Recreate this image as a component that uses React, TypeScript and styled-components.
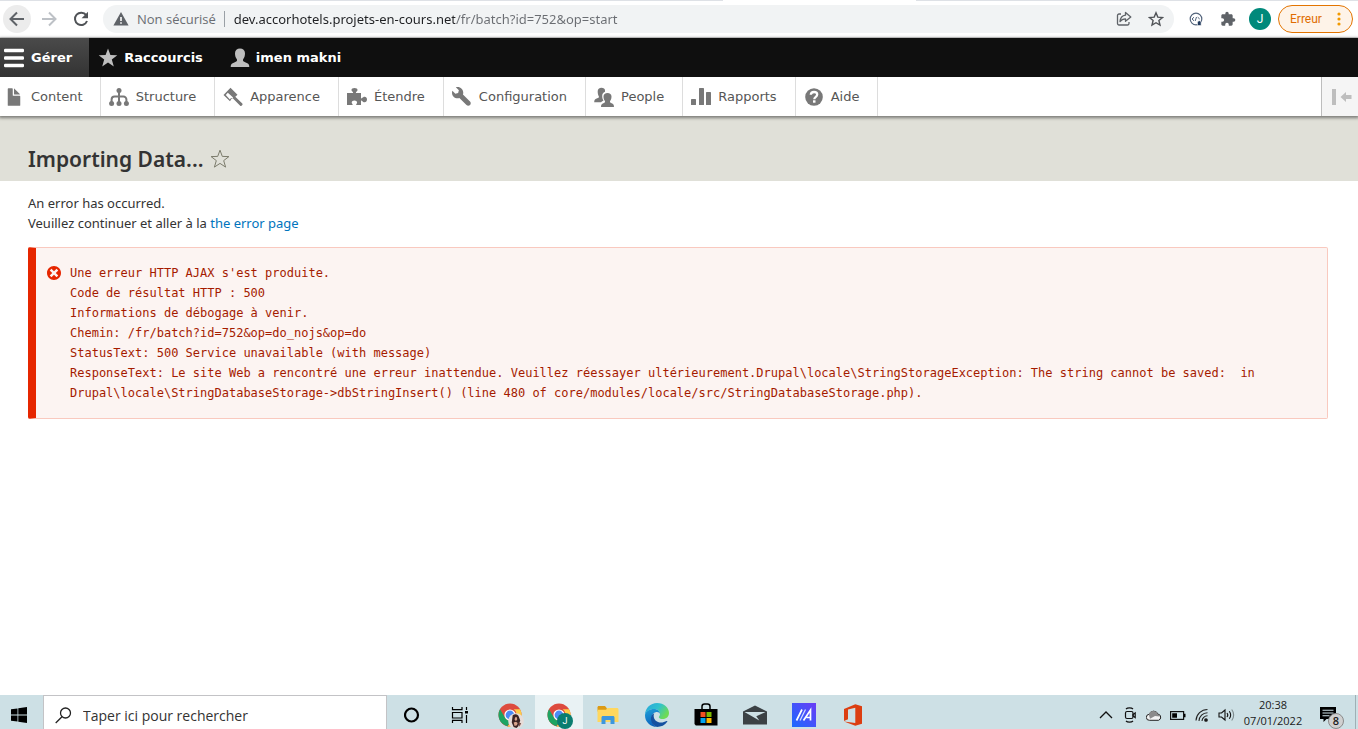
import React from "react";
import styled, { createGlobalStyle, css } from "styled-components";

const GlobalStyle = createGlobalStyle`
  *, *::before, *::after { box-sizing: border-box; }
  html, body { margin: 0; padding: 0; background: #fff; }
  h1, p { margin: 0; }
  button { border: 0; padding: 0; margin: 0; background: none; font: inherit; color: inherit; cursor: pointer; }
  input { border: 0; padding: 0; margin: 0; background: none; outline: 0; }
  svg { display: block; flex: none; }
`;

const uiFont = `"Open Sans", "Noto Sans", sans-serif`;
const contentFont = `"Noto Sans", "Open Sans", sans-serif`;
const badgeFont = `Roboto, "Liberation Sans", sans-serif`;
const toolbarFont = `"DejaVu Sans", Verdana, sans-serif`;

const Page = styled.div`
  display: flex;
  flex-direction: column;
  min-height: 100vh;
  font-family: ${uiFont};
`;

/* ---------- browser bar ---------- */

const BrowserBar = styled.header`
  display: flex;
  align-items: center;
  gap: 4px;
  height: 38px;
  padding: 1px 5px 0 3px;
  border-bottom: 1px solid #dcdcdc;
  background: linear-gradient(90deg, #dee1e6 723px, #fff 723px 916px, #dee1e6 916px) top / 100% 1px no-repeat #fff;
`;

const BarButton = styled.button<{ $filled?: boolean }>`
  display: flex;
  align-items: center;
  justify-content: center;
  flex: none;
  width: 28px;
  height: 28px;
  border-radius: 50%;
  background: ${(p) => (p.$filled ? "#ececec" : "transparent")};
`;

const AddressBox = styled.form`
  display: flex;
  align-items: center;
  flex: 1;
  min-width: 0;
  height: 28px;
  margin: 0 4px;
  padding: 0 4px 0 10px;
  border-radius: 14px;
  background: #f1f3f4;
  font-size: 13px;
  gap: 4px;
`;

const SecurityLabel = styled.button`
  display: flex;
  align-items: center;
  flex: none;
  gap: 8px;
  height: 16px;
  padding-right: 8px;
  border-right: 1px solid #9aa0a6;
  color: #6a6d72;
`;

const UrlInput = styled.input`
  flex: 1;
  min-width: 0;
  height: 20px;
  margin-left: 5px;
  font-family: ${contentFont};
  font-size: 13px;
  color: transparent;
  caret-color: #202124;
  background: linear-gradient(90deg, #202124 221px, #6a6d72 221px);
  background-clip: text;
  -webkit-background-clip: text;
`;

const Avatar = styled.button`
  display: flex;
  align-items: center;
  justify-content: center;
  flex: none;
  width: 22px;
  height: 22px;
  margin: 0 3px;
  border-radius: 50%;
  background: #00897b;
  color: #fff;
  font-family: ${badgeFont};
  font-size: 12px;
`;

const ErrorPill = styled.button`
  display: flex;
  align-items: center;
  justify-content: space-between;
  flex: none;
  width: 75px;
  height: 28px;
  padding: 0 11px;
  border: 1px solid #e37400;
  border-radius: 14px;
  background: #fef3e8;
  color: #e06c00;
  font-family: ${badgeFont};
  font-size: 12px;
`;

/* ---------- Drupal toolbar ---------- */

const Toolbar = styled.nav`
  position: relative;
  font-family: ${toolbarFont};
  font-size: 13px;
  box-shadow: 0 1px 3px 1px rgba(0, 0, 0, 0.45);
`;

const ToolbarTabs = styled.div`
  display: flex;
  height: 39px;
  background: #0f0f0f;
`;

const ToolbarTab = styled.button<{ $active?: boolean }>`
  display: flex;
  align-items: center;
  gap: 6px;
  padding: 0 18px 0 9px;
  color: #fff;
  font-weight: 700;
  ${(p) =>
    p.$active &&
    css`
      gap: 7px;
      padding: 0 17px 0 4px;
      background: linear-gradient(#4a4a4a, #333);
    `}
`;

const ToolbarTray = styled.div`
  display: flex;
  height: 39px;
  background: #fff;
`;

const TrayItem = styled.a`
  display: flex;
  align-items: center;
  gap: 7px;
  padding: 0 18px 0 8px;
  border-right: 1px solid #ddd;
  color: #565656;
  text-decoration: none;
  &:first-child { padding: 0 17px 0 4px; }
`;

const OrientationToggle = styled.button`
  display: flex;
  align-items: center;
  justify-content: center;
  width: 37px;
  margin-left: auto;
  padding-left: 4px;
  border-left: 1px solid #bdbdbd;
  background: #f5f5f5;
`;

/* ---------- page content ---------- */

const PageHeader = styled.div`
  display: flex;
  align-items: center;
  gap: 3px;
  height: 65px;
  padding: 20px 28px 0;
  background: #e0e0d8;
`;

const Title = styled.h1`
  font-family: ${contentFont};
  font-size: 21px;
  line-height: 28px;
  font-weight: 600;
  color: #333;
`;

const Main = styled.main`
  flex: 1;
  padding: 12px 30px 24px 28px;
  font-family: ${contentFont};
  font-size: 13px;
  line-height: 20px;
  color: #333;
`;

const ErrorLink = styled.a`
  color: #0074bd;
  text-decoration: none;
`;

const ErrorMessage = styled.div`
  display: flex;
  gap: 8px;
  margin-top: 14px;
  padding: 15px 16px 15px 10px;
  border: 1px solid #f9c9bf;
  border-left: 8px solid #e62600;
  border-radius: 2px;
  background: #fcf4f2;
  color: #a51b00;
`;

const ErrorIcon = styled.svg`
  margin-top: 2px;
`;

const ErrorText = styled.div`
  flex: 1;
  min-width: 0;
  font-family: "DejaVu Sans Mono", Consolas, monospace;
  font-size: 12px;
  line-height: 20px;
  white-space: pre-wrap;
`;

/* ---------- task bar ---------- */

const TaskBar = styled.footer`
  display: flex;
  align-items: flex-start;
  height: 34px;
  overflow: hidden;
  background: #cde0e5;
  color: #1a1a1a;
`;

const TaskButton = styled.button<{ $active?: boolean; $width?: number }>`
  position: relative;
  display: flex;
  align-items: center;
  justify-content: center;
  flex: none;
  width: ${(p) => p.$width ?? 48}px;
  height: 40px;
  background: ${(p) => (p.$active ? "#e9f2f4" : "transparent")};
`;

const StartButton = styled(TaskButton)`
  padding-right: 6px;
`;

const SearchBox = styled.label`
  display: flex;
  align-items: center;
  gap: 11px;
  flex: 0 1 344px;
  height: 40px;
  padding: 0 11px;
  border: 1px solid #c3c3c6;
  background: #fff;
`;

const SearchInput = styled.input`
  flex: 1;
  min-width: 0;
  font-family: ${uiFont};
  font-size: 14px;
  &::placeholder { color: #333; opacity: 1; }
`;

const AppButtons = styled.div`
  display: flex;
  gap: 1px;
  padding-left: 1px;
`;

const Tray = styled.div`
  display: flex;
  margin-left: auto;
`;

const Clock = styled.button`
  display: flex;
  flex-direction: column;
  align-items: center;
  width: 70px;
  padding-top: 2px;
  font-size: 11px;
  line-height: 16px;
`;

const CountBadge = styled.span`
  position: absolute;
  left: 20px;
  top: 18px;
  width: 16px;
  height: 16px;
  border: 1px solid #8a8a8a;
  border-radius: 50%;
  background: #d0d0d0;
  font-size: 11px;
  font-weight: 600;
  line-height: 14px;
  text-align: center;
`;

const ProfileBadge = styled.span`
  position: absolute;
  left: 22px;
  top: 18px;
  width: 16px;
  height: 16px;
  border-radius: 50%;
  background: #0a7d70;
  color: #fff;
  font-family: ${badgeFont};
  font-size: 9px;
  line-height: 16px;
  text-align: center;
`;

const PhotoBadge = styled.svg`
  position: absolute;
  left: 22px;
  top: 18px;
`;

const ShowDesktop = styled.button`
  width: 3px;
  height: 40px;
  border-left: 1px solid #9fb0b5;
`;

/* ---------- icons ---------- */

const grey = "#787878";

const ExtendPath =
  "M20.5 11H19V7c0-1.100-.9-2-2-2h-4V3.500a2.500 2.500 0 0 0-5 0V5H4c-1.100 0-2 .9-2 2v3.800h1.500a2.700 2.700 0 0 1 0 5.400H2V20c0 1.100.9 2 2 2h3.800v-1.500a2.700 2.700 0 0 1 5.400 0V22H17c1.100 0 2-.9 2-2v-4h1.500a2.500 2.500 0 0 0 0-5z";

const FileIcon = () => (
  <svg width="20" height="20" viewBox="0 0 16 16" fill={grey}>
    <path d="M12.502 7h-5c-.276 0-.502-.225-.502-.5v-5c0-.275-.225-.5-.5-.5h-3c-.275 0-.5.225-.5.5v13.029c0 .275.225.5.5.5h9.002c.275 0 .5-.225.5-.5V7.500c0-.275-.225-.5-.5-.5zM8.502 6h4c.275 0 .34-.159.146-.354l-4.293-4.292c-.195-.195-.353-.129-.353.146v4c0 .275.225.5.5.5z" />
  </svg>
);

const StructureIcon = () => (
  <svg width="20" height="20" viewBox="0 0 20 20" fill={grey}>
    <circle cx="10" cy="3.500" r="2.500" />
    <circle cx="2.600" cy="16.500" r="2.500" />
    <circle cx="10" cy="16.500" r="2.500" />
    <circle cx="17.400" cy="16.500" r="2.500" />
    <path d="M10 4v12M2.600 16v-3.500a3 3 0 0 1 3-3h8.800a3 3 0 0 1 3 3V16" fill="none" stroke={grey} strokeWidth="2" />
  </svg>
);

const AppearanceIcon = () => (
  <svg width="20" height="20" viewBox="0 0 20 20">
    <path d="M.5 8 7.500 .8l7 7-3 2.800-3 1.200-1.500 2.400z" fill={grey} />
    <path d="M2.800 8 4.800 5.800l5.600 5-2.600.5-.9 1.200z" fill="#fff" />
    <path d="m11.500 11 6.500 6.300" stroke={grey} strokeWidth="3" strokeLinecap="round" />
  </svg>
);

const PuzzleIcon = () => (
  <svg width="20" height="20" viewBox="0 0 20 20" fill={grey}>
    <path d="M0 6h5.500c.6 0 .8-.5.4-1C5 4 4.500 3.600 4.500 2.900 4.500 1.700 5.700 1 7.500 1s3 .7 3 1.900c0 .7-.5 1.100-1.400 2.100-.4.5-.2 1 .4 1H14v4.700c0 .7.500.9 1.100.4.800-.7 1.500-1.300 2.500-1.300 1.400 0 2.400 1.100 2.400 2.700s-1 2.700-2.400 2.700c-1 0-1.700-.6-2.500-1.300-.6-.5-1.100-.3-1.100.4V18H9.800c-.7 0-.9-.6-.4-1.100.5-.6.7-1 .7-1.500 0-1.200-1.200-2-2.700-2s-2.700.8-2.700 2c0 .5.200.9.7 1.500.5.500.3 1.100-.4 1.100H0z" />
  </svg>
);

const WrenchIcon = () => (
  <svg width="20" height="20" viewBox="0 0 16 16" fill={grey}>
    <path d="M14.416 11.586l-5.666-5.665c.15-.449.252-.921.252-1.421 0-2.485-2.016-4.500-4.502-4.500-.505 0-.981.102-1.434.255l2.431 2.431-.588 2.196-2.196.588-2.445-2.445c-.162.464-.268.956-.268 1.475 0 2.486 2.014 4.500 4.500 4.500.5 0 .972-.102 1.421-.251l5.667 5.665c.781.781 2.047.781 2.828 0s.781-2.047 0-2.828z" />
  </svg>
);

const PeopleIcon = () => (
  <svg width="20" height="20" viewBox="0 0 20 20" fill={grey}>
    <path d="M7.500.8c2 0 3.500 1 3.500 2.800v1.200C9 5.600 8.200 7 8.200 9c0 1.800.4 3.200 1.300 4.400-.9.600-1.800.9-2.400 1.800H.2c0-2.300.7-3 2.500-3.700 1.800-.6 2.500-1 2.100-2.300C4 8.200 3.700 6.400 3.700 4.300 3.700 2.200 5.300.8 7.500.8z" />
    <path d="M13.500 6c2.300 0 4 1.300 4 3.600 0 1.900-.4 3.300-1.400 4.500-.4 1.300.2 1.700 1.500 2.100 1.700.6 2.400 1.200 2.400 3.800H7c0-2.600.7-3.200 2.400-3.800 1.300-.4 1.900-.8 1.500-2.100-1-1.200-1.400-2.600-1.400-4.500C9.500 7.300 11.200 6 13.500 6z" />
  </svg>
);

const ReportsIcon = () => (
  <svg width="20" height="20" viewBox="0 0 20 20" fill={grey}>
    <rect x="0" y="12" width="5" height="6" rx=".6" />
    <rect x="8" y="1" width="5" height="17" rx=".6" />
    <rect x="15" y="5" width="5" height="13" rx=".6" />
  </svg>
);

const HelpIcon = () => (
  <svg width="20" height="20" viewBox="0 0 20 20">
    <circle cx="10" cy="10" r="8.800" fill={grey} />
    <path d="M6.800 7.700C6.900 5.900 8.200 5 10 5s3.200 1 3.200 2.600c0 1.300-.7 1.900-1.600 2.600-.8.600-1.300 1-1.300 2" fill="none" stroke="#fff" strokeWidth="2.300" />
    <rect x="9" y="13.300" width="2.500" height="2.400" fill="#fff" />
  </svg>
);

const MenuIcon = () => (
  <svg width="20" height="20" viewBox="0 0 20 20" fill="#fff">
    <rect y="0.700" width="20" height="3.600" rx="1.200" />
    <rect y="8.200" width="20" height="3.600" rx="1.200" />
    <rect y="15.700" width="20" height="3.600" rx="1.200" />
  </svg>
);

const StarIcon = () => (
  <svg width="20" height="20" viewBox="0 0 20 20" fill="#bebebe">
    <path d="m10 .6 2.400 6.500 6.900.2-5.500 4.300 2 6.800L10 14.500l-5.800 3.900 2-6.800L.7 7.300l6.900-.2z" />
  </svg>
);

const PersonIcon = () => (
  <svg width="20" height="20" viewBox="0 0 20 20" fill="#bebebe">
    <path d="M10 .5c2.900 0 5 1.700 5 4.800 0 2.500-.6 4.500-1.900 6-.5 1.900.3 2.400 2.600 3.100 2.600.8 3.600 1.700 3.600 4.600H.7c0-2.900 1-3.800 3.600-4.600 2.300-.7 3.100-1.200 2.600-3.100C5.600 9.800 5 7.800 5 5.300 5 2.200 7.100.5 10 .5z" />
  </svg>
);

const ChromeIcon = () => (
  <svg width="24" height="24" viewBox="0 0 24 24">
    <circle cx="12" cy="12" r="11.500" fill="#dd4b3e" />
    <path d="M2 6.300 7.200 15a5.700 5.700 0 0 0 5.500 2.700l-3.200 5.500A11.500 11.500 0 0 1 2 6.300z" fill="#1da462" />
    <path d="M22 6.300a11.500 11.500 0 0 1-12.500 17L16.900 15a5.700 5.700 0 0 0-1.200-8.700z" fill="#ffcd46" />
    <circle cx="12" cy="12" r="5.600" fill="#fff" />
    <circle cx="12" cy="12" r="4.400" fill="#4c8bf5" />
  </svg>
);

const trayItems: [string, () => React.JSX.Element][] = [
  ["Content", FileIcon],
  ["Structure", StructureIcon],
  ["Apparence", AppearanceIcon],
  ["Étendre", PuzzleIcon],
  ["Configuration", WrenchIcon],
  ["People", PeopleIcon],
  ["Rapports", ReportsIcon],
  ["Aide", HelpIcon],
];

const errorLines = [
  "Une erreur HTTP AJAX s'est produite.",
  "Code de résultat HTTP : 500",
  "Informations de débogage à venir.",
  "Chemin: /fr/batch?id=752&op=do_nojs&op=do",
  "StatusText: 500 Service unavailable (with message)",
  "ResponseText: Le site Web a rencontré une erreur inattendue. Veuillez réessayer ultérieurement.Drupal\\locale\\StringStorageException: The string cannot be saved:  in Drupal\\locale\\StringDatabaseStorage->dbStringInsert() (line 480 of core/modules/locale/src/StringDatabaseStorage.php).",
];

function Browser() {
  return (
    <BrowserBar>
      <BarButton $filled aria-label="Retour">
        <svg width="16" height="16" viewBox="0 0 16 16" fill="none" stroke="#5f6368" strokeWidth="2">
          <path d="M15 8H2M8 1.500 1.500 8 8 14.500" />
        </svg>
      </BarButton>
      <BarButton aria-label="Avancer">
        <svg width="16" height="16" viewBox="0 0 16 16" fill="none" stroke="#bdc1c6" strokeWidth="2">
          <path d="M1 8h13M8 1.500 14.500 8 8 14.500" />
        </svg>
      </BarButton>
      <BarButton aria-label="Actualiser">
        <svg width="16" height="16" viewBox="0 0 16 16">
          <path d="M13.200 4.200A6.200 6.200 0 1 0 14 10" fill="none" stroke="#505357" strokeWidth="2" />
          <path d="M15 .8v6.400H8.600z" fill="#505357" />
        </svg>
      </BarButton>
      <AddressBox>
        <SecurityLabel type="button">
          <svg width="16" height="14" viewBox="0 0 16 14">
            <path d="M8 0l7.600 13.500H.4z" fill="#5f6368" />
            <path d="M7.200 5h1.600v4H7.200zM7.200 10.200h1.600v1.600H7.200z" fill="#fff" />
          </svg>
          Non sécurisé
        </SecurityLabel>
        <UrlInput aria-label="Adresse" defaultValue="dev.accorhotels.projets-en-cours.net/fr/batch?id=752&op=start" />
        <BarButton type="button" aria-label="Partager">
          <svg width="16" height="16" viewBox="0 0 16 16" fill="none" stroke="#5f6368" strokeWidth="1.300" strokeLinejoin="round">
            <path d="M5 3H3a1.500 1.500 0 0 0-1.500 1.500v8A1.500 1.500 0 0 0 3 14h8.500a1.500 1.500 0 0 0 1.500-1.500V11" />
            <path d="M9.500 1.500 14.800 6 9.500 10.300V7.800C7 7.800 5.300 8.600 4 10.600c.3-3.200 2.200-6 5.500-6.400z" />
          </svg>
        </BarButton>
        <BarButton type="button" aria-label="Favori">
          <svg width="16" height="16" viewBox="0 0 16 16" fill="none" stroke="#505357" strokeWidth="1.400">
            <path d="m8 1.800 1.800 4.300 4.700.4-3.600 3 1.100 4.600L8 11.700l-4 2.400 1.100-4.600-3.600-3 4.700-.4z" />
          </svg>
        </BarButton>
      </AddressBox>
      <BarButton aria-label="Extension">
        <svg width="14" height="14" viewBox="0 0 14 14" fill="none" stroke="#53647c">
          <circle cx="7" cy="7" r="5.800" strokeWidth="1.200" />
          <path d="M5 5.200 3 7l2 1.800M8.700 5.200l2 1.800M7.500 5 6.200 9" />
          <path d="M8.500 13.500v-3a1.800 1.800 0 0 1 3.600 0v3z" fill="#223a5e" stroke="#f7f7f7" strokeWidth=".6" />
        </svg>
      </BarButton>
      <BarButton aria-label="Extensions">
        <svg width="16" height="16" viewBox="0 0 24 24" fill="#5f6368">
          <path d={ExtendPath} />
        </svg>
      </BarButton>
      <Avatar aria-label="Profil">J</Avatar>
      <ErrorPill>
        Erreur
        <svg width="4" height="14" viewBox="0 0 4 14" fill="#f29900">
          <circle cx="2" cy="2" r="1.600" />
          <circle cx="2" cy="7" r="1.600" />
          <circle cx="2" cy="12" r="1.600" />
        </svg>
      </ErrorPill>
    </BrowserBar>
  );
}

function AdminToolbar() {
  return (
    <Toolbar>
      <ToolbarTabs>
        <ToolbarTab $active><MenuIcon />Gérer</ToolbarTab>
        <ToolbarTab><StarIcon />Raccourcis</ToolbarTab>
        <ToolbarTab><PersonIcon />imen makni</ToolbarTab>
      </ToolbarTabs>
      <ToolbarTray>
        {trayItems.map(([label, Icon]) => (
          <TrayItem href="#" key={label}><Icon />{label}</TrayItem>
        ))}
        <OrientationToggle aria-label="Orientation verticale">
          <svg width="20" height="16" viewBox="0 0 20 16" fill="#bebebe">
            <rect x="0" y="0" width="4" height="16" />
            <path d="M8.500 8 14 3v3h5.500v4H14v3z" />
          </svg>
        </OrientationToggle>
      </ToolbarTray>
    </Toolbar>
  );
}

function WindowsTaskBar() {
  return (
    <TaskBar>
      <StartButton $width={43} aria-label="Démarrer">
        <svg width="16" height="16" viewBox="0 0 16 16">
          <path d="M0 2.300 6.500 1.400v6.200H0zM7.300 1.300 16 0v7.600H7.300zM0 8.400h6.500v6.200L0 13.700zM7.300 8.400H16V16l-8.700-1.300z" />
        </svg>
      </StartButton>
      <SearchBox>
        <svg width="17" height="17" viewBox="0 0 17 17" fill="none" stroke="#222" strokeWidth="1.300">
          <circle cx="10.500" cy="6" r="5" />
          <path d="M7 9.700.7 16" />
        </svg>
        <SearchInput aria-label="Rechercher" placeholder="Taper ici pour rechercher" />
      </SearchBox>
      <AppButtons>
        <TaskButton aria-label="Cortana">
          <svg width="16" height="16" viewBox="0 0 16 16">
            <circle cx="7.500" cy="8" r="6.500" fill="none" stroke="#000" strokeWidth="2.200" />
          </svg>
        </TaskButton>
        <TaskButton aria-label="Applications">
          <svg width="20" height="16" viewBox="0 0 20 16" fill="none" stroke="#000" strokeWidth="1.200">
            <path d="M1.500 0v2.700h9.500V0M1.500 16v-2.700h9.500V16M1.500 5.500h9.500v5.500H1.500zM15.500 0v3M15.500 8v8" />
            <rect x="14" y="4" width="3" height="2.500" fill="#000" stroke="none" />
          </svg>
        </TaskButton>
        <TaskButton aria-label="Chrome">
          <ChromeIcon />
          <PhotoBadge width="16" height="16" viewBox="0 0 17 17">
            <circle cx="8.500" cy="8.500" r="8.300" fill="#e7dcd8" />
            <path d="M5 2.500c2-2 6-1.600 6.500 1.500l1.500 4-2 6-2 2-3-1-2-5z" fill="#3a2424" />
            <path d="M7.500 4.500h2l.3 2.500-1.300 1.500-1.500-1.300zM6 10l2.500-.8 1.800 1.300-.8 2.500-2.500.8z" fill="#d9a48c" />
            <path d="m11 10 3 1-1.800 3.500z" fill="#7a4d45" />
          </PhotoBadge>
        </TaskButton>
        <TaskButton $active aria-label="Chrome J">
          <ChromeIcon />
          <ProfileBadge>J</ProfileBadge>
        </TaskButton>
        <TaskButton aria-label="Explorateur">
          <svg width="22" height="20" viewBox="0 0 22 20">
            <path d="M.5 2.500c0-.8.500-1.500 1.300-1.500H8l2 2.500v3H.5z" fill="#dc9a14" />
            <path d="M.5 4.800H9L10.500 3H20c.8 0 1.500.6 1.500 1.400V17H.5z" fill="#ffd75e" />
            <path d="M4.500 19v-6.500c0-.8.600-1.500 1.500-1.500h10c.9 0 1.500.7 1.500 1.500V19h-4v-4h-5v4z" fill="#3d97dd" />
          </svg>
        </TaskButton>
        <TaskButton aria-label="Edge">
          <svg width="24" height="24" viewBox="0 0 24 24">
            <defs>
              <linearGradient id="edgeTop" x1="0" y1="0" x2="1" y2=".5">
                <stop offset="0" stopColor="#2aa5dc" />
                <stop offset=".55" stopColor="#2fc2ce" />
                <stop offset="1" stopColor="#6edb55" />
              </linearGradient>
              <linearGradient id="edgeSide" x1="0" y1="0" x2=".3" y2="1">
                <stop offset="0" stopColor="#1fa0d8" />
                <stop offset="1" stopColor="#0b62bd" />
              </linearGradient>
            </defs>
            <path d="M0 11.500C.3 5 5.500 0 12 0c7 0 12 4.600 12 10 0 3.700-2.800 6-6.200 6-2.600 0-4-1-4-1.800 0-.7 1.200-1.100 1.200-3.200C15 8.300 12.500 6 9 6 4.500 6 .8 8.500 0 11.500z" fill="url(#edgeTop)" />
            <path d="M0 12.500C0 8.500 4.300 6 9 6c3.500 0 6 2.300 6 5-.3-1.200-1.600-2-3-2-2.500 0-5.500 2-5.500 6.500 0 4 2.500 7.300 5.500 8.500C5.200 24 0 18.700 0 12.500z" fill="url(#edgeSide)" />
            <path d="M9.300 10.200C7.800 13 9 17.500 13 19c3 1.100 6.200.3 8.600-1 .6-.3 1 .2.600.8C20 22.200 16 24 12 24c-4-1.500-6.500-5-6-9.500.3-2 1.500-3.700 3.300-4.300z" fill="#1451a0" />
          </svg>
        </TaskButton>
        <TaskButton aria-label="Microsoft Store">
          <svg width="24" height="24" viewBox="0 0 24 24">
            <path d="M8 7V3.500C8 2 9 1 10.500 1h3C15 1 16 2 16 3.500V7" fill="none" stroke="#000" strokeWidth="1.500" />
            <path d="M.5 6h23v16.500H1.800L.5 21z" />
            <path fill="#f25022" d="M6.500 9h5v5h-5z" />
            <path fill="#7fba00" d="M12.500 9h5v5h-5z" />
            <path fill="#00a4ef" d="M6.500 15h5v5h-5z" />
            <path fill="#ffb900" d="M12.500 15h5v5h-5z" />
          </svg>
        </TaskButton>
        <TaskButton aria-label="Courrier">
          <svg width="24" height="20" viewBox="0 0 24 20">
            <path d="M0 6.500 12 .5l12 6V19.500H0z" fill="#3b4144" />
            <path d="M1.500 7h21L13.300 11.300l3 4.200z" fill="#cde0e5" />
          </svg>
        </TaskButton>
        <TaskButton aria-label="MyASUS">
          <svg width="24" height="24" viewBox="0 0 24 24">
            <defs>
              <linearGradient id="asus" x1="0" y1="1" x2="1" y2="0">
                <stop offset="0" stopColor="#1a6bff" />
                <stop offset="1" stopColor="#6c3cf5" />
              </linearGradient>
            </defs>
            <rect width="24" height="24" fill="url(#asus)" />
            <path d="M4.500 17.500 10 6.500M11.500 17.500l7-10.500v10.500M14.500 14.500h4" fill="none" stroke="#fff" strokeWidth="1.700" />
            <path d="M8 17.500l5.500-11" stroke="#d5dcff" strokeWidth="1.300" />
          </svg>
        </TaskButton>
        <TaskButton aria-label="Office">
          <svg width="18" height="22" viewBox="0 0 18 22">
            <path d="M0 5 11.300.3 18 2.200v17.600l-6.700 2L0 17.500l11.300 1.400V3.800L4 5.500v9.700L0 17z" fill="#dc3e11" />
          </svg>
        </TaskButton>
      </AppButtons>
      <Tray>
        <TaskButton $width={24} aria-label="Icônes cachées">
          <svg width="14" height="8" viewBox="0 0 14 8" fill="none" stroke="#111" strokeWidth="1.300">
            <path d="M1 7l6-6 6 6" />
          </svg>
        </TaskButton>
        <TaskButton $width={24} aria-label="Caméra">
          <svg width="14" height="16" viewBox="0 0 14 16" fill="none" stroke="#111" strokeWidth="1.200">
            <path d="M3 2C4.500.4 8.500.4 10 2M3 14c1.500 1.600 5.500 1.600 7 0" />
            <rect x="2.500" y="4.500" width="7.500" height="7" rx="1.500" />
            <path d="M10 7.500 12.200 6v4.500L10 9z" />
          </svg>
        </TaskButton>
        <TaskButton $width={24} aria-label="OneDrive">
          <svg width="16" height="11" viewBox="0 0 16 11">
            <path d="M3.500 10.300a3 3 0 0 1-.3-6A4.700 4.700 0 0 1 12 4.100a3.200 3.200 0 0 1 .5 6.200z" fill="#f3f3f3" stroke="#222" />
            <path d="M2.800 4.500A4.700 4.700 0 0 1 11.800 4L14 6.500 9 6 4 8.800z" fill="#8b8b8b" />
          </svg>
        </TaskButton>
        <TaskButton $width={24} aria-label="Batterie">
          <svg width="16" height="9" viewBox="0 0 16 9">
            <rect x=".6" y=".6" width="13" height="7.800" fill="none" stroke="#111" strokeWidth="1.200" />
            <path d="M2.200 2.200H7v4.600H2.200zM14 2.800h1.500v3.400H14z" />
          </svg>
        </TaskButton>
        <TaskButton $width={24} aria-label="Wi-Fi">
          <svg width="14" height="14" viewBox="0 0 14 14" fill="none" stroke="#222" strokeWidth="1.100">
            <path d="M1 12.500A11.500 11.500 0 0 1 12.500 1.500M4 13a8.500 8.500 0 0 1 8.500-8.300M7 13a5.500 5.500 0 0 1 5.500-5.200" />
            <circle cx="11" cy="12" r="1.300" fill="#111" />
          </svg>
        </TaskButton>
        <TaskButton $width={24} aria-label="Volume">
          <svg width="17" height="14" viewBox="0 0 17 14" fill="none" stroke="#111" strokeWidth="1.100">
            <path d="M1 5v4h2.500L7 12V2L3.500 5zM9 5c.8 1 .8 3 0 4M11.300 3.200c1.600 2.200 1.600 5.400 0 7.600" />
            <path d="M13.700 1.500c2.600 3.200 2.600 7.800 0 11" stroke="#7d8a8d" />
          </svg>
        </TaskButton>
        <Clock>
          <span>20:38</span>
          <span>07/01/2022</span>
        </Clock>
        <TaskButton $width={47} aria-label="Notifications">
          <svg width="25" height="18" viewBox="0 0 25 18">
            <path d="M1 1h16v12H7.500L4.500 16v-3H1z" />
            <path d="M3.500 4.200h11M3.500 7h11M3.500 9.800h7" stroke="#cde0e5" strokeWidth="1.100" />
          </svg>
          <CountBadge>8</CountBadge>
        </TaskButton>
        <ShowDesktop aria-label="Afficher le bureau" />
      </Tray>
    </TaskBar>
  );
}

export default function App() {
  return (
    <Page>
      <GlobalStyle />
      <Browser />
      <AdminToolbar />
      <PageHeader>
        <Title>Importing Data...</Title>
        <BarButton aria-label="Ajouter aux raccourcis">
          <svg width="20" height="20" viewBox="0 0 20 20" fill="none" stroke="#7c7c6c" strokeLinejoin="round">
            <path d="m10 1.200 2.300 6.200 6.600.2-5.200 4 1.900 6.500-5.600-3.700-5.600 3.700 1.900-6.500-5.200-4 6.600-.2z" />
          </svg>
        </BarButton>
      </PageHeader>
      <Main>
        <p>
          An error has occurred.
          <br />
          Veuillez continuer et aller à la <ErrorLink href="#">the error page</ErrorLink>
        </p>
        <ErrorMessage role="alert">
          <ErrorIcon width="16" height="16" viewBox="0 0 16 16" fill="#e62600">
            <path d="M8.002 1c-3.868 0-7.002 3.134-7.002 7s3.134 7 7.002 7c3.865 0 7-3.134 7-7s-3.135-7-7-7zm4.025 9.284c.062.063.1.149.1.239 0 .091-.037.177-.1.24l-1.262 1.262c-.064.062-.15.1-.24.1s-.176-.036-.24-.1l-2.283-2.283-2.286 2.283c-.064.062-.15.1-.24.1s-.176-.036-.24-.1l-1.261-1.262c-.063-.062-.1-.148-.1-.24 0-.088.036-.176.1-.238l2.283-2.285-2.283-2.284c-.063-.064-.1-.15-.1-.24s.036-.176.1-.24l1.262-1.262c.063-.063.149-.1.24-.1.089 0 .176.036.24.1l2.285 2.284 2.283-2.284c.064-.063.15-.1.24-.1s.176.036.24.1l1.262 1.262c.062.063.1.149.1.24 0 .089-.037.176-.1.24l-2.283 2.284 2.283 2.284z" />
          </ErrorIcon>
          <ErrorText>{errorLines.join("\n")}</ErrorText>
        </ErrorMessage>
      </Main>
      <WindowsTaskBar />
    </Page>
  );
}
